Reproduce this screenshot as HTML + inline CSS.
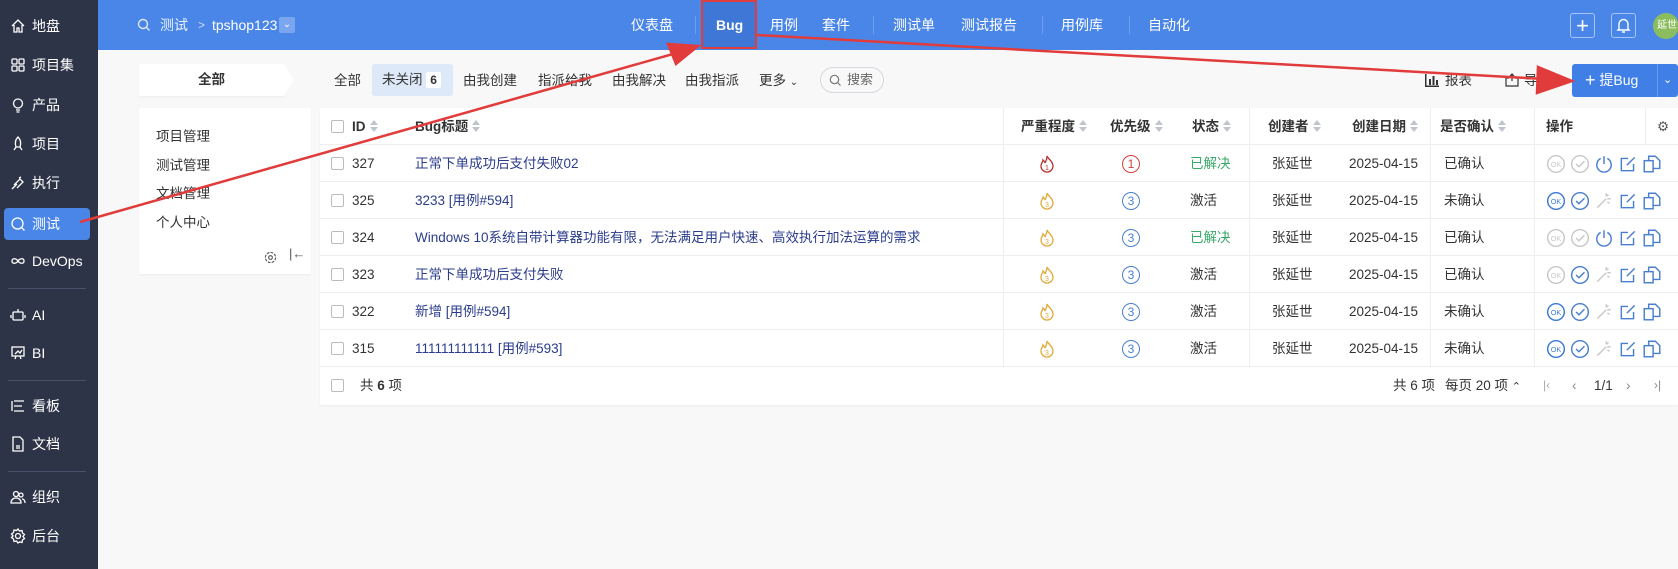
<!DOCTYPE html>
<html><head><meta charset="utf-8"><style>
*{box-sizing:border-box;margin:0;padding:0}
body{width:1678px;height:569px;overflow:hidden;background:#f8f8f9;font-family:"Liberation Sans","Noto Sans CJK SC",sans-serif;font-size:14px;color:#333;position:relative}
.abs{position:absolute}
#side{left:0;top:0;width:98px;height:569px;background:#2e3447}
.si{position:absolute;left:10px;color:#fff;font-size:14px;display:flex;align-items:center;gap:6px;height:30px}
.si svg{width:16px;height:16px;stroke:#fff;fill:none;stroke-width:1.3}
.sep{position:absolute;left:8px;width:78px;height:1px;background:#48506a}
#top{left:98px;top:0;right:0;height:50px;background:#4a86e8}
.nav{position:absolute;top:0;height:50px;line-height:50px;color:#fff;font-size:14px}
.vs{position:absolute;top:16px;width:1px;height:18px;background:#6d9ef0}
.tab{position:absolute;top:66px;height:30px;line-height:30px;font-size:13.5px;color:#333}
.panel{background:#fff;position:absolute;box-shadow:0 1px 2px rgba(0,0,0,.05)}
.row{position:absolute;left:320px;width:1358px;height:37px;border-bottom:1px solid #eceef2;font-size:13.5px}
.row>*{position:absolute;top:0;line-height:37px}
.cb{width:13px;height:13px;border:1px solid #bbb;border-radius:2px;background:#fff;top:12px!important}
.hd{font-weight:bold}
.sort{display:inline-block;width:8px;height:12px;vertical-align:-1px;margin-left:4px;position:relative}
.sort:before{content:"";position:absolute;left:0;top:0;border:4px solid transparent;border-bottom:5px solid #c0c4cc;border-top:0}
.sort:after{content:"";position:absolute;left:0;top:7px;border:4px solid transparent;border-top:5px solid #c0c4cc;border-bottom:0}
.ops svg{width:20px;height:20px;margin-right:4px;vertical-align:middle;fill:none;stroke-width:1.3}
.circ{display:inline-block;width:18px;height:18px;border-radius:50%;border:1.3px solid #5b8bd6;color:#5b8bd6;font-size:12px;line-height:16px;text-align:center}
</style></head><body>
<div id="side" class="abs">
<div class="si" style="top:11px"><svg viewBox="0 0 16 16"><path d="M2 8L8 2l6 6M4 7v7h3v-4h2v4h3V7"/></svg>地盘</div>
<div class="si" style="top:50px"><svg viewBox="0 0 16 16"><rect x="2" y="2" width="5" height="5" rx="1"/><rect x="9" y="2" width="5" height="5" rx="1"/><rect x="2" y="9" width="5" height="5" rx="1"/><rect x="9" y="9" width="5" height="5" rx="1"/></svg>项目集</div>
<div class="si" style="top:90px"><svg viewBox="0 0 16 16"><circle cx="8" cy="6.5" r="4.5"/><path d="M6 13h4M6.5 15h3"/></svg>产品</div>
<div class="si" style="top:129px"><svg viewBox="0 0 16 16"><path d="M8 1c3 3 3 7 2 10H6C5 8 5 4 8 1zM6 11l-2 3M10 11l2 3"/></svg>项目</div>
<div class="si" style="top:168px"><svg viewBox="0 0 16 16"><path d="M2 14l5-5M4 10l6-6 3 3-6 6M9 3l2-1"/></svg>执行</div>
<div class="abs" style="left:4px;top:208px;width:86px;height:32px;background:#4a86e8;border-radius:4px"></div>
<div class="si" style="top:209px"><svg viewBox="0 0 16 16"><circle cx="7.5" cy="7.5" r="5.5"/><path d="M11.5 11.5l3 3"/></svg>测试</div>
<div class="si" style="top:246px"><svg viewBox="0 0 16 16"><path d="M8 8c-2-3-6-3-6 0s4 3 6 0 6-3 6 0-4 3-6 0"/></svg>DevOps</div>
<div class="sep" style="top:288px"></div>
<div class="si" style="top:300px"><svg viewBox="0 0 16 16"><rect x="3" y="5" width="10" height="8" rx="1"/><path d="M8 2v3M1 8v3M15 8v3"/></svg>AI</div>
<div class="si" style="top:338px"><svg viewBox="0 0 16 16"><rect x="2" y="2" width="12" height="9"/><path d="M5 9l3-3 2 2 2-3M6 11l-1 3M10 11l1 3"/></svg>BI</div>
<div class="sep" style="top:380px"></div>
<div class="si" style="top:391px"><svg viewBox="0 0 16 16"><path d="M4 3h10M4 8h8M4 13h10M2 3v10"/></svg>看板</div>
<div class="si" style="top:429px"><svg viewBox="0 0 16 16"><path d="M3 1h7l3 3v11H3zM6 10h4M6 12h4"/></svg>文档</div>
<div class="sep" style="top:471px"></div>
<div class="si" style="top:482px"><svg viewBox="0 0 16 16"><circle cx="6" cy="5" r="2.5"/><circle cx="11" cy="6" r="2"/><path d="M1 14c0-3 2-5 5-5s5 2 5 5zM12 10c2 0 3 2 3 4"/></svg>组织</div>
<div class="si" style="top:521px"><svg viewBox="0 0 16 16"><circle cx="8" cy="8" r="2.5"/><path d="M8 1l1.5 2 2.5-.5.5 2.5 2 1.5-1.5 2 1.5 2-2 1.5-.5 2.5-2.5-.5L8 15l-1.5-2-2.5.5-.5-2.5L1.5 9.5 3 8 1.5 6 3.5 4.5 4 2l2.5.5z"/></svg>后台</div>
</div>
<div id="top" class="abs"></div>
<svg class="abs" style="left:137px;top:18px" width="14" height="14" viewBox="0 0 14 14" fill="none" stroke="#dfe9fb" stroke-width="1.4"><circle cx="6" cy="6" r="4.5"/><path d="M9.5 9.5l3 3"/></svg>
<div class="nav" style="left:160px;color:#eaf1fd">测试</div>
<div class="nav" style="left:198px;color:#cfdcf7;font-size:12px">&gt;</div>
<div class="nav" style="left:212px">tpshop123</div>
<div class="abs" style="left:279px;top:17px;width:16px;height:16px;background:#7aa6ef;border-radius:2px;color:#fff;font-size:10px;text-align:center;line-height:16px">⌄</div>
<div class="nav" style="left:631px">仪表盘</div>
<div class="vs" style="left:695px"></div>
<div class="abs" style="left:701px;top:0;width:56px;height:49px;background:#3f77d6;border:2px solid #e03d3d"></div>
<div class="nav" style="left:716px;font-weight:bold">Bug</div>
<div class="nav" style="left:770px">用例</div>
<div class="nav" style="left:822px">套件</div>
<div class="vs" style="left:873px"></div>
<div class="nav" style="left:893px">测试单</div>
<div class="nav" style="left:961px">测试报告</div>
<div class="vs" style="left:1042px"></div>
<div class="nav" style="left:1061px">用例库</div>
<div class="vs" style="left:1129px"></div>
<div class="nav" style="left:1148px">自动化</div>
<div class="abs" style="left:1570px;top:13px;width:25px;height:25px;border:1px solid #a9c5f5;border-radius:3px;color:#fff;text-align:center;line-height:23px;font-size:22px">+</div>
<div class="abs" style="left:1611px;top:13px;width:25px;height:25px;border:1px solid #a9c5f5;border-radius:3px"><svg width="23" height="23" viewBox="0 0 23 23" fill="none" stroke="#fff" stroke-width="1.4"><path d="M7 15V10a4.5 4.5 0 019 0v5l1 1H6zM10 18h3"/></svg></div>
<div class="abs" style="left:1653px;top:13px;width:26px;height:26px;border-radius:50%;background:#8bbd5f;color:#fff;font-size:10px;line-height:26px;padding-left:4px">延世</div>

<div class="panel" style="left:139px;top:64px;width:145px;height:32px;text-align:center;line-height:32px;font-weight:bold;font-size:13.5px">全部</div>
<div class="abs" style="left:284px;top:64px;width:0;height:0;border-top:16px solid transparent;border-bottom:16px solid transparent;border-left:10px solid #fff"></div>
<div class="tab" style="left:334px">全部</div>
<div class="abs" style="left:372px;top:64px;width:81px;height:32px;background:#dde8f8;border-radius:3px"></div>
<div class="tab" style="left:382px;top:65px">未关闭 <span style="background:#fff;padding:1px 4px;font-weight:bold;font-size:12px;border-radius:2px">6</span></div>
<div class="tab" style="left:463px">由我创建</div>
<div class="tab" style="left:538px">指派给我</div>
<div class="tab" style="left:612px">由我解决</div>
<div class="tab" style="left:685px">由我指派</div>
<div class="tab" style="left:759px">更多 <span style="font-size:10px">⌄</span></div>
<div class="abs" style="left:820px;top:67px;width:64px;height:26px;border:1px solid #d5d8de;border-radius:13px;font-size:13px;line-height:24px;padding-left:26px;color:#666">搜索</div>
<svg class="abs" style="left:829px;top:74px" width="13" height="13" viewBox="0 0 13 13" fill="none" stroke="#777" stroke-width="1.2"><circle cx="5.5" cy="5.5" r="4.2"/><path d="M8.5 8.5l3 3"/></svg>
<svg class="abs" style="left:1425px;top:74px" width="14" height="13" viewBox="0 0 14 13" fill="#333"><rect x="0" y="0" width="1.5" height="13"/><rect x="0" y="11.5" width="14" height="1.5"/><rect x="4" y="5" width="2" height="6"/><rect x="7.5" y="2" width="2" height="9"/><rect x="11" y="6" width="2" height="5"/></svg>
<div class="tab" style="left:1445px">报表</div>
<svg class="abs" style="left:1505px;top:73px" width="14" height="14" viewBox="0 0 14 14" fill="none" stroke="#333" stroke-width="1.2"><path d="M4 5H1v8h12V5h-3M7 1v7M5 3l2-2 2 2"/></svg>
<div class="tab" style="left:1524px">导出</div>
<div class="abs" style="left:1572px;top:64px;width:106px;height:33px;background:#3f7fe6;border-radius:3px"></div>
<div class="abs" style="left:1657px;top:64px;width:1px;height:33px;background:#6a9cf0"></div>
<div class="tab" style="left:1585px;top:65px;color:#fff;font-size:14px"><span style="font-size:18px;vertical-align:-1px">+</span> 提Bug</div>
<div class="tab" style="left:1663px;top:65px;color:#fff;font-size:11px">⌄</div>

<div class="panel" style="left:139px;top:108px;width:172px;height:166px"></div>
<div class="abs" style="left:156px;top:123px;line-height:28.5px;font-size:13.5px">项目管理<br>测试管理<br>文档管理<br>个人中心</div>
<svg class="abs" style="left:264px;top:251px" width="13" height="13" viewBox="0 0 14 14" fill="none" stroke="#555" stroke-width="1.2"><circle cx="7" cy="7" r="2"/><circle cx="7" cy="7" r="5.5" stroke-dasharray="3 1.3"/></svg>
<div class="abs" style="left:289px;top:246px;font-size:13px;color:#555">|←</div>

<div class="panel" style="left:320px;top:108px;width:1358px;height:297px"></div>
<div class="abs" style="left:1003px;top:108px;width:1px;height:260px;background:#eceef2"></div>
<div class="abs" style="left:1249px;top:108px;width:1px;height:260px;background:#eceef2"></div>
<div class="abs" style="left:1430px;top:108px;width:1px;height:260px;background:#eceef2"></div>
<div class="abs" style="left:1534px;top:108px;width:1px;height:260px;background:#eceef2"></div>
<div class="abs" style="left:1645px;top:108px;width:1px;height:37px;background:#eceef2"></div>
<div class="row hd" style="top:108px">
<div class="cb" style="left:11px"></div><div style="left:32px">ID<span class="sort"></span></div><div style="left:95px">Bug标题<span class="sort"></span></div>
<div style="left:701px">严重程度<span class="sort"></span></div><div style="left:790px">优先级<span class="sort"></span></div><div style="left:872px">状态<span class="sort"></span></div>
<div style="left:948px">创建者<span class="sort"></span></div><div style="left:1032px">创建日期<span class="sort"></span></div><div style="left:1120px">是否确认<span class="sort"></span></div><div style="left:1226px">操作</div>
<div style="left:1337px;font-weight:normal;color:#555">⚙</div>
</div>
<div id="rows"></div>
<div class="row" style="top:367px;border:none">
<div class="cb" style="left:11px"></div><div style="left:40px">共 <b>6</b> 项</div>
<div style="left:1073px">共 6 项</div><div style="left:1125px">每页 20 项 <span style="font-size:11px">⌃</span></div>
<div style="left:1223px;color:#aaa;font-size:12px">|‹</div><div style="left:1252px;color:#888">‹</div><div style="left:1274px">1/1</div><div style="left:1306px;color:#888">›</div><div style="left:1334px;color:#888;font-size:12px">›|</div>
</div>
<script>
const d=[["327","正常下单成功后支付失败02",1,"已解决","已确认",0],["325","3233 [用例#594]",3,"激活","未确认",1],["324","Windows 10系统自带计算器功能有限，无法满足用户快速、高效执行加法运算的需求",3,"已解决","已确认",0],["323","正常下单成功后支付失败",3,"激活","已确认",2],["322","新增 [用例#594]",3,"激活","未确认",1],["315","111111111111 [用例#593]",3,"激活","未确认",1]];
let h="";d.forEach((r,i)=>{const t=145+i*37;const sc=r[2]==1?"#b83030":"#e0a93a";const pc=r[2]==1?"#d04040":"#4a7fd0";
const okc=r[5]==1?"#3a78d8":"#c8c8c8",ckc=r[5]==0?"#c8c8c8":"#4a7fd0";const res=r[3]=="已解决";
h+=`<div class="row" style="top:${t}px"><div class="cb" style="left:11px"></div><div style="left:32px">${r[0]}</div><div style="left:95px;color:#2b3c8c">${r[1]}</div>
<div style="left:719px"><svg width="16" height="18" viewBox="0 0 16 18" style="vertical-align:middle" fill="none" stroke="${sc}" stroke-width="1.3"><path d="M8 1c1 3 6 5 6 10a6 6 0 01-12 0c0-3 2-4 2-6 1 1 2 2 2 3 1-2 2-4 2-7z"/><text x="8" y="15" font-size="7" text-anchor="middle" fill="${sc}" stroke="none">${r[2]}</text></svg></div>
<div style="left:802px"><span class="circ" style="border-color:${pc};color:${pc}">${r[2]}</span></div>
<div style="left:870px;color:${res?'#3aa86a':'#333'}">${r[3]}</div><div style="left:952px">张延世</div><div style="left:1029px">2025-04-15</div><div style="left:1124px">${r[4]}</div>
<div class="ops" style="left:1226px">
<svg viewBox="0 0 18 18" stroke="${okc}"><circle cx="9" cy="9" r="7.5"/><text x="9" y="11.5" font-size="6.5" text-anchor="middle" fill="${okc}" stroke="none">OK</text></svg><svg viewBox="0 0 18 18" stroke="${ckc}"><circle cx="9" cy="9" r="7.5"/><path d="M5.5 9l2.5 2.5 5-5"/></svg>${res?`<svg viewBox="0 0 18 18" stroke="#4a7fd0"><path d="M6 4a6.5 6.5 0 106 0M9 2v7"/></svg>`:`<svg viewBox="0 0 18 18" stroke="#c8c8c8"><path d="M3 15l8-8M11 2v3M15 7h-3M13 3l-1.5 1.5M14 11l-2-1"/></svg>`}<svg viewBox="0 0 18 18" stroke="#4a7fd0"><path d="M14 9v6H3V4h6M8 10l7-7"/></svg><svg viewBox="0 0 18 18" stroke="#4a7fd0"><rect x="2" y="6" width="8" height="10"/><path d="M6 6V2h6l4 4v7h-6"/></svg></div></div>`});
document.getElementById("rows").innerHTML=h;
</script>
<svg class="abs" style="left:0;top:0" width="1678" height="569">
<g stroke="#e23b3b" stroke-width="2.5" fill="#e23b3b">
<line x1="80" y1="222" x2="680" y2="52"/>
<polygon points="698,46 668,44 676,64"/>
<line x1="757" y1="35" x2="1545" y2="79"/>
<polygon points="1572,81 1538,67 1537,93"/>
</g></svg>
</body></html>
